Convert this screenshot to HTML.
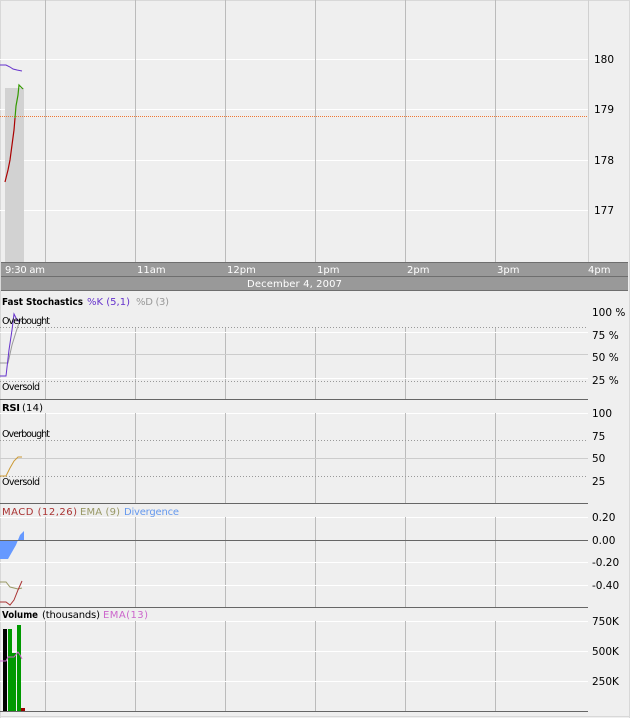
<!DOCTYPE html><html><head><style>body{margin:0;background:#efefef}svg{display:block;font-family:"DejaVu Sans","Liberation Sans",sans-serif}</style></head><body>
<svg width="630" height="718" viewBox="0 0 630 718" xmlns="http://www.w3.org/2000/svg">
<rect width="630" height="718" fill="#efefef"/>
<line x1="0" y1="0.5" x2="630" y2="0.5" stroke="#d8d8d8"/>
<line x1="629.5" y1="0" x2="629.5" y2="718" stroke="#d8d8d8"/>
<line x1="0.5" y1="0" x2="0.5" y2="718" stroke="#d8d8d8"/>
<!-- main chart -->
<g stroke="#fff"><line x1="0" y1="59.5" x2="588" y2="59.5"/><line x1="0" y1="109.5" x2="588" y2="109.5"/><line x1="0" y1="160.5" x2="588" y2="160.5"/><line x1="0" y1="210.5" x2="588" y2="210.5"/></g>
<rect x="5" y="88" width="19" height="174" fill="#d2d2d2"/>
<g stroke="#bbb"><line x1="45.5" y1="0" x2="45.5" y2="262"/><line x1="135.5" y1="0" x2="135.5" y2="262"/><line x1="225.5" y1="0" x2="225.5" y2="262"/><line x1="315.5" y1="0" x2="315.5" y2="262"/><line x1="405.5" y1="0" x2="405.5" y2="262"/><line x1="495.5" y1="0" x2="495.5" y2="262"/></g>
<line x1="588.5" y1="0" x2="588.5" y2="262" stroke="#d0d0d0"/>
<line x1="0" y1="116.5" x2="588" y2="116.5" stroke="#ee7733" stroke-dasharray="1,1"/>
<polyline points="0,65 6,65 10,67 13,69 17,70 22,71" fill="none" stroke="#6633cc"/>
<polyline points="5,182 8,170 10,160 12,145 14,130 15,118" fill="none" stroke="#aa0000" stroke-width="1.2"/>
<polyline points="15,118 16,106 18,95 19,85 21,87 23,89" fill="none" stroke="#339900" stroke-width="1.2"/>
<g font-size="10.5" fill="#000"><text x="594" y="63">180</text><text x="594" y="113">179</text><text x="594" y="164">178</text><text x="594" y="214">177</text></g>
<!-- axis bar -->
<rect x="1" y="262" width="627" height="28" fill="#999"/>
<g stroke="#6e6e6e"><line x1="1" y1="262.5" x2="628" y2="262.5"/><line x1="1" y1="276.5" x2="628" y2="276.5"/><line x1="1" y1="290.5" x2="628" y2="290.5"/></g>
<g font-size="10" fill="#fff"><text x="5" y="273" textLength="40">9:30 am</text><text x="137" y="273">11am</text><text x="227" y="273">12pm</text><text x="317" y="273">1pm</text><text x="407" y="273">2pm</text><text x="497" y="273">3pm</text><text x="588" y="273">4pm</text><text x="247" y="287" textLength="95">December 4, 2007</text></g>
<!-- stochastics -->
<g font-size="10"><text x="2" y="305" font-weight="bold" fill="#000" textLength="81" lengthAdjust="spacingAndGlyphs">Fast Stochastics</text><text x="87" y="305" fill="#6633cc" textLength="43">%K (5,1)</text><text x="136" y="305" fill="#999" textLength="33">%D (3)</text></g>
<g stroke="#bbb"><line x1="45.5" y1="328" x2="45.5" y2="399"/><line x1="135.5" y1="328" x2="135.5" y2="399"/><line x1="225.5" y1="328" x2="225.5" y2="399"/><line x1="315.5" y1="328" x2="315.5" y2="399"/><line x1="405.5" y1="328" x2="405.5" y2="399"/><line x1="495.5" y1="328" x2="495.5" y2="399"/></g>
<line x1="0" y1="332.5" x2="588" y2="332.5" stroke="#fff"/>
<line x1="0" y1="354.5" x2="588" y2="354.5" stroke="#ccc"/>
<line x1="0" y1="378.5" x2="588" y2="378.5" stroke="#fff"/>
<g stroke="#999" stroke-dasharray="1,2"><line x1="0" y1="327.5" x2="588" y2="327.5"/><line x1="0" y1="381.5" x2="588" y2="381.5"/></g>
<polyline points="0,363 8,363 12,345 16,332 20,320 22,322" fill="none" stroke="#999"/>
<polyline points="0,376 6,376 9,350 12,330 14,314 17,320 20,322" fill="none" stroke="#6633cc"/>
<g font-size="9.5" fill="#000"><text x="2" y="324" textLength="48">Overbought</text><text x="2" y="390" textLength="38">Oversold</text></g>
<g font-size="10.5"><text x="592" y="316">100 %</text><text x="592" y="339">75 %</text><text x="592" y="361">50 %</text><text x="592" y="384">25 %</text></g>
<line x1="0" y1="399.5" x2="588" y2="399.5" stroke="#666"/>
<!-- RSI -->
<g font-size="10"><text x="2" y="411" font-weight="bold" textLength="18">RSI</text><text x="22" y="411" textLength="21">(14)</text></g>
<line x1="0" y1="413.5" x2="588" y2="413.5" stroke="#fff"/>
<g stroke="#bbb"><line x1="45.5" y1="413" x2="45.5" y2="503"/><line x1="135.5" y1="413" x2="135.5" y2="503"/><line x1="225.5" y1="413" x2="225.5" y2="503"/><line x1="315.5" y1="413" x2="315.5" y2="503"/><line x1="405.5" y1="413" x2="405.5" y2="503"/><line x1="495.5" y1="413" x2="495.5" y2="503"/></g>
<line x1="0" y1="458.5" x2="588" y2="458.5" stroke="#ccc"/>
<g stroke="#999" stroke-dasharray="1,2"><line x1="0" y1="440.5" x2="588" y2="440.5"/><line x1="0" y1="476.5" x2="588" y2="476.5"/></g>
<polyline points="0,476 6,476 10,468 14,461 18,457 22,457" fill="none" stroke="#cc9933"/>
<g font-size="9.5"><text x="2" y="437" textLength="48">Overbought</text><text x="2" y="485" textLength="38">Oversold</text></g>
<g font-size="10.5"><text x="592" y="417">100</text><text x="592" y="440">75</text><text x="592" y="462">50</text><text x="592" y="485">25</text></g>
<line x1="0" y1="503.5" x2="588" y2="503.5" stroke="#666"/>
<!-- MACD -->
<g font-size="10"><text x="2" y="515" fill="#aa3333" textLength="75">MACD (12,26)</text><text x="80" y="515" fill="#999966" textLength="40">EMA (9)</text><text x="124" y="515" fill="#6699ee" textLength="55">Divergence</text></g>
<line x1="0" y1="517.5" x2="588" y2="517.5" stroke="#fff"/>
<g stroke="#bbb"><line x1="45.5" y1="517" x2="45.5" y2="607"/><line x1="135.5" y1="517" x2="135.5" y2="607"/><line x1="225.5" y1="517" x2="225.5" y2="607"/><line x1="315.5" y1="517" x2="315.5" y2="607"/><line x1="405.5" y1="517" x2="405.5" y2="607"/><line x1="495.5" y1="517" x2="495.5" y2="607"/></g>
<g stroke="#fff"><line x1="0" y1="562.5" x2="588" y2="562.5"/><line x1="0" y1="585.5" x2="588" y2="585.5"/></g>
<polygon points="0,540 24,540 24,531 20,535 16,545 12,552 8,559 0,559" fill="#6699ff"/>
<line x1="0" y1="540.5" x2="588" y2="540.5" stroke="#666"/>
<polyline points="0,582 6,582 10,587 14,588 18,589 22,588" fill="none" stroke="#999966"/>
<polyline points="0,602 6,602 10,605 14,600 18,590 22,581" fill="none" stroke="#aa3333"/>
<g font-size="10.5"><text x="592" y="521">0.20</text><text x="592" y="544">0.00</text><text x="592" y="566">-0.20</text><text x="592" y="589">-0.40</text></g>
<line x1="0" y1="607.5" x2="588" y2="607.5" stroke="#666"/>
<!-- Volume -->
<g font-size="10"><text x="2" y="618" font-weight="bold" textLength="36" lengthAdjust="spacingAndGlyphs">Volume</text><text x="42" y="618" textLength="58">(thousands)</text><text x="103" y="618" fill="#cc66cc" textLength="45">EMA(13)</text></g>
<line x1="0" y1="621.5" x2="588" y2="621.5" stroke="#fff"/>
<g stroke="#bbb"><line x1="45.5" y1="621" x2="45.5" y2="711"/><line x1="135.5" y1="621" x2="135.5" y2="711"/><line x1="225.5" y1="621" x2="225.5" y2="711"/><line x1="315.5" y1="621" x2="315.5" y2="711"/><line x1="405.5" y1="621" x2="405.5" y2="711"/><line x1="495.5" y1="621" x2="495.5" y2="711"/></g>
<g stroke="#fff"><line x1="0" y1="651.5" x2="588" y2="651.5"/><line x1="0" y1="681.5" x2="588" y2="681.5"/></g>
<rect x="3" y="629" width="4" height="82" fill="#000"/>
<rect x="8" y="629" width="4" height="82" fill="#009900"/>
<rect x="12" y="653" width="4" height="58" fill="#009900"/>
<rect x="17" y="625" width="4" height="86" fill="#009900"/>
<rect x="21" y="708" width="4" height="3" fill="#990000"/>
<polyline points="0,661 6,661 8,657 14,657 18,652 20,655 22,659" fill="none" stroke="#cc66cc"/>
<g font-size="10.5"><text x="592" y="625">750K</text><text x="592" y="655">500K</text><text x="592" y="685">250K</text></g>
<line x1="0" y1="711.5" x2="588" y2="711.5" stroke="#666"/>
<line x1="0" y1="716.5" x2="630" y2="716.5" stroke="#d8d8d8"/>
</svg>
</body></html>
